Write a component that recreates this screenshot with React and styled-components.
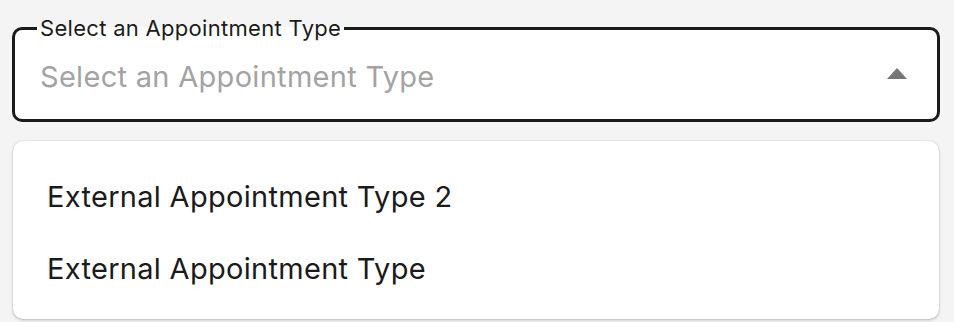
import styled, { createGlobalStyle } from 'styled-components';

const GlobalStyle = createGlobalStyle`
  html, body { margin: 0; padding: 0; background: #f4f4f4; }
  body { font-family: Inter, "Noto Sans", sans-serif; overflow: hidden; }
`;

const OPCOES = ['External Appointment Type 2', 'External Appointment Type'];

export default function App() {
  return (
    <>
      <GlobalStyle />
      <Page>
        <Campo>
          <Rotulo>Select an Appointment Type</Rotulo>
          <Placeholder>Select an Appointment Type</Placeholder>
          <Seta viewBox="0 0 20 11" aria-hidden="true">
            <path d="M0 11 L10 0 L20 11 Z" fill="#767676" />
          </Seta>
        </Campo>
        <Menu>
          {OPCOES.map((o) => (
            <Opcao key={o}>{o}</Opcao>
          ))}
        </Menu>
      </Page>
    </>
  );
}

const Page = styled.div`
  position: relative;
  width: 928px; height: 306px;
  padding: 16px 0 0 12px;
  box-sizing: content-box;
`;

const Campo = styled.fieldset`
  margin: 0; padding: 0 30px 0 25px;
  height: 106px; box-sizing: border-box;
  border: 3px solid #1b1b1b; border-radius: 10px;
  background: #fff;
  display: flex; align-items: center; justify-content: space-between;
`;

const Rotulo = styled.legend`
  padding: 0 3px; margin-left: -3px;
  font-size: 22px; line-height: 24px; color: #1b1b1b;
  letter-spacing: 0.3px;
`;

const Placeholder = styled.span`
  font-size: 29px; color: #a3a3a3; margin-top: -7px;
  letter-spacing: 0.3px;
`;

const Seta = styled.svg`
  width: 20px; height: 11px; margin-top: -12px;
`;

const Menu = styled.ul`
  position: absolute; top: 141px; left: 13px;
  width: 926px; height: 178px; box-sizing: border-box;
  margin: 0; padding: 19px 0 0; list-style: none;
  background: #fff; border-radius: 10px;
  box-shadow: 0 1px 3px rgba(0,0,0,0.25), 0 0 1px rgba(0,0,0,0.15);
`;

const Opcao = styled.li`
  height: 72px; padding-left: 34px;
  display: flex; align-items: center;
  font-size: 29px; color: #1b1b1b;
  letter-spacing: 0.3px;
`;
